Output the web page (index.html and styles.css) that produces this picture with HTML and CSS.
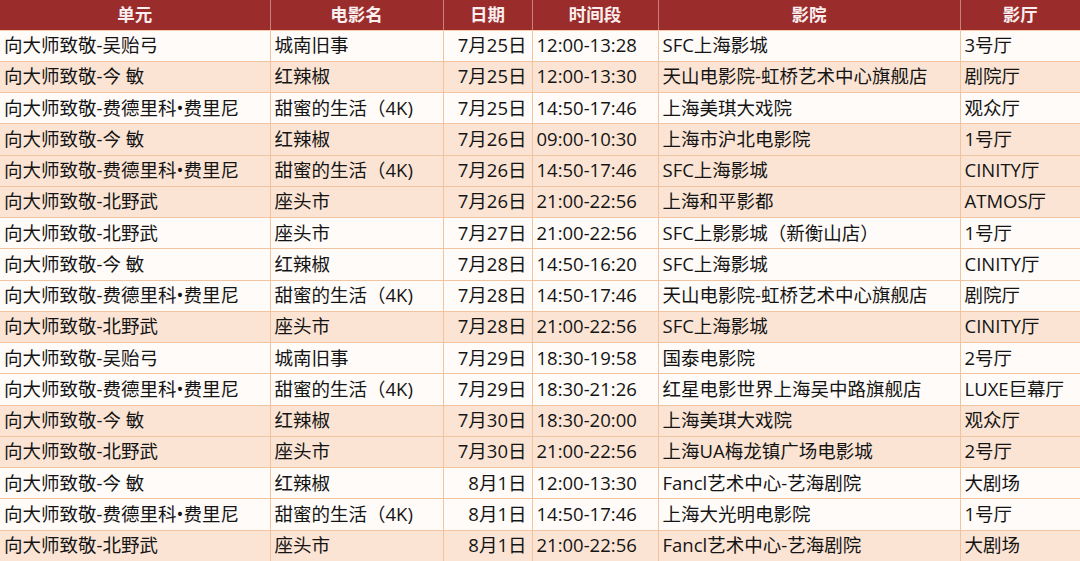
FILE: index.html
```html
<!DOCTYPE html>
<html lang="zh-CN">
<head>
<meta charset="utf-8">
<title>向大师致敬 排片表</title>
<link rel="stylesheet" href="styles.css">
</head>
<body>
<table class="sched">
  <colgroup>
    <col class="c-unit"><col class="c-film"><col class="c-date"><col class="c-time"><col class="c-cinema"><col class="c-hall">
  </colgroup>
  <thead>
    <tr><th>单元</th><th>电影名</th><th>日期</th><th>时间段</th><th>影院</th><th>影厅</th></tr>
  </thead>
  <tbody>
    <tr class="w"><td>向大师致敬-吴贻弓</td><td>城南旧事</td><td class="d">7月25日</td><td>12:00-13:28</td><td>SFC上海影城</td><td>3号厅</td></tr>
    <tr class="p"><td>向大师致敬-今 敏</td><td>红辣椒</td><td class="d">7月25日</td><td>12:00-13:30</td><td>天山电影院-虹桥艺术中心旗舰店</td><td>剧院厅</td></tr>
    <tr class="w"><td>向大师致敬-费德里科•费里尼</td><td>甜蜜的生活（4K)</td><td class="d">7月25日</td><td>14:50-17:46</td><td>上海美琪大戏院</td><td>观众厅</td></tr>
    <tr class="p"><td>向大师致敬-今 敏</td><td>红辣椒</td><td class="d">7月26日</td><td>09:00-10:30</td><td>上海市沪北电影院</td><td>1号厅</td></tr>
    <tr class="p"><td>向大师致敬-费德里科•费里尼</td><td>甜蜜的生活（4K)</td><td class="d">7月26日</td><td>14:50-17:46</td><td>SFC上海影城</td><td>CINITY厅</td></tr>
    <tr class="p"><td>向大师致敬-北野武</td><td>座头市</td><td class="d">7月26日</td><td>21:00-22:56</td><td>上海和平影都</td><td>ATMOS厅</td></tr>
    <tr class="w"><td>向大师致敬-北野武</td><td>座头市</td><td class="d">7月27日</td><td>21:00-22:56</td><td>SFC上影影城（新衡山店）</td><td>1号厅</td></tr>
    <tr class="w"><td>向大师致敬-今 敏</td><td>红辣椒</td><td class="d">7月28日</td><td>14:50-16:20</td><td>SFC上海影城</td><td>CINITY厅</td></tr>
    <tr class="w"><td>向大师致敬-费德里科•费里尼</td><td>甜蜜的生活（4K)</td><td class="d">7月28日</td><td>14:50-17:46</td><td>天山电影院-虹桥艺术中心旗舰店</td><td>剧院厅</td></tr>
    <tr class="p"><td>向大师致敬-北野武</td><td>座头市</td><td class="d">7月28日</td><td>21:00-22:56</td><td>SFC上海影城</td><td>CINITY厅</td></tr>
    <tr class="w"><td>向大师致敬-吴贻弓</td><td>城南旧事</td><td class="d">7月29日</td><td>18:30-19:58</td><td>国泰电影院</td><td>2号厅</td></tr>
    <tr class="w"><td>向大师致敬-费德里科•费里尼</td><td>甜蜜的生活（4K)</td><td class="d">7月29日</td><td>18:30-21:26</td><td>红星电影世界上海吴中路旗舰店</td><td>LUXE巨幕厅</td></tr>
    <tr class="p"><td>向大师致敬-今 敏</td><td>红辣椒</td><td class="d">7月30日</td><td>18:30-20:00</td><td>上海美琪大戏院</td><td>观众厅</td></tr>
    <tr class="p"><td>向大师致敬-北野武</td><td>座头市</td><td class="d">7月30日</td><td>21:00-22:56</td><td>上海UA梅龙镇广场电影城</td><td>2号厅</td></tr>
    <tr class="w"><td>向大师致敬-今 敏</td><td>红辣椒</td><td class="d">8月1日</td><td>12:00-13:30</td><td>Fancl艺术中心-艺海剧院</td><td>大剧场</td></tr>
    <tr class="w"><td>向大师致敬-费德里科•费里尼</td><td>甜蜜的生活（4K)</td><td class="d">8月1日</td><td>14:50-17:46</td><td>上海大光明电影院</td><td>1号厅</td></tr>
    <tr class="p"><td>向大师致敬-北野武</td><td>座头市</td><td class="d">8月1日</td><td>21:00-22:56</td><td>Fancl艺术中心-艺海剧院</td><td>大剧场</td></tr>
  </tbody>
</table>
</body>
</html>
```

FILE: styles.css
```css
html, body {
  margin: 0;
  padding: 0;
  background: #fffbf8;
}

body {
  font-family: "Open Sans", "Noto Sans CJK SC", sans-serif;
  color: #141414;
  overflow: hidden;
}

.sched {
  width: 1080px;
  border-collapse: collapse;
  table-layout: fixed;
}

.c-unit { width: 270px; }
.c-film { width: 173px; }
.c-date { width: 89px; }
.c-time { width: 126px; }
.c-cinema { width: 302px; }
.c-hall { width: 120px; }

.sched th {
  height: 28.5px;
  padding: 0 0 1px;
  background: #9a2d2c;
  color: #fbeeee;
  font-family: "Noto Sans CJK SC", sans-serif;
  font-weight: 700;
  font-size: 17.5px;
  line-height: 20px;
  text-align: center;
  vertical-align: middle;
  border-left: 1px solid #c9807c;
  border-bottom: 1px solid #f3c9a8;
}

.sched th:first-child { border-left: none; }

.sched td {
  height: 31.25px;
  padding: 0 4px 1px;
  box-sizing: border-box;
  font-size: 18.5px;
  line-height: 20px;
  vertical-align: middle;
  white-space: nowrap;
  overflow: hidden;
  border: 1px solid #f1c4a1;
  border-top: none;
}

.sched td:first-child { border-left: none; }
.sched td:last-child { border-right: none; }

.sched td.d {
  text-align: right;
  padding-right: 5px;
}

.w td { background: #fffbf8; }
.p td { background: #fbe4d4; }
```
